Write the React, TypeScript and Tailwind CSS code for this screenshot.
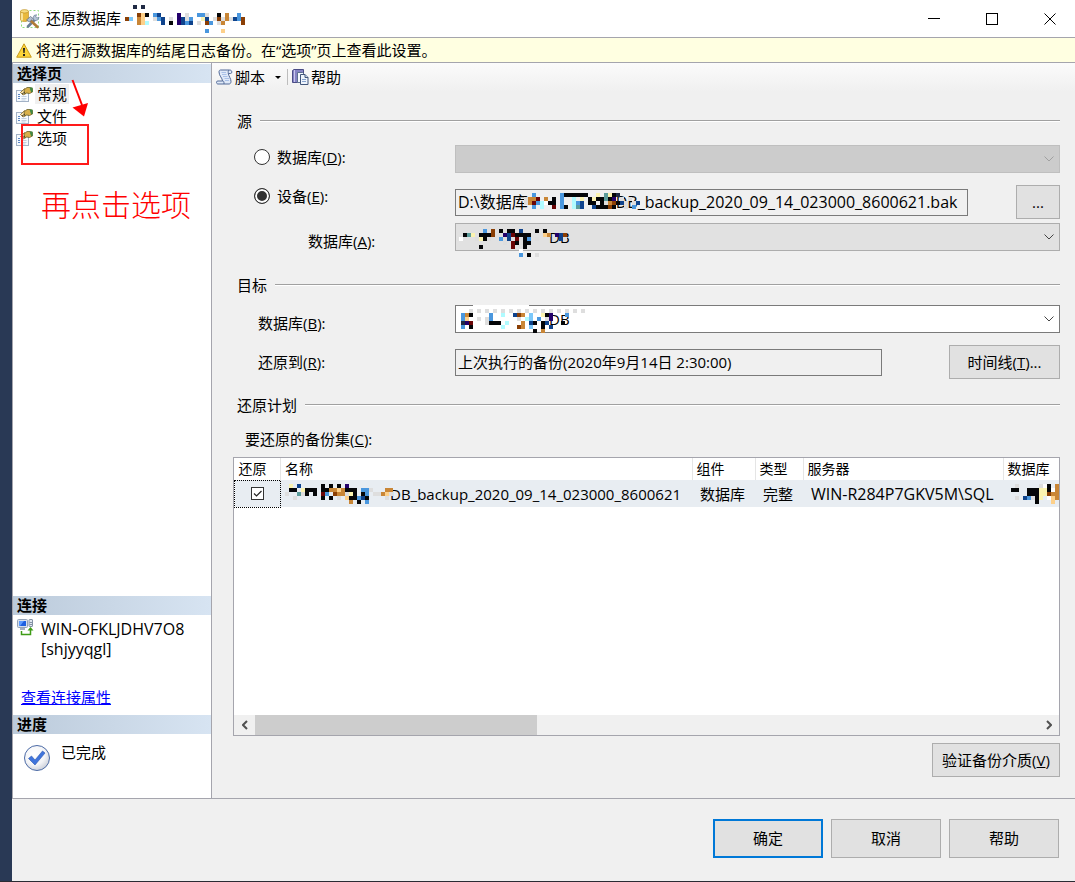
import type { ReactNode } from "react";
import clsx from "clsx";

const FONT = "font-['Open_Sans','Noto_Sans_CJK_SC',sans-serif]";

const PALETTE: Record<string, string> = {
  k: "#050608",
  n: "#1f2a44",
  p: "#23006b",
  d: "#0f438c",
  b: "#4a97de",
  l: "#7cc8fa",
  c: "#b0fbff",
  t: "#5b9c9b",
  o: "#c98636",
  m: "#8b3f05",
  r: "#6a0505",
  y: "#fbf3b0",
  s: "#fdd08a",
  g: "#dedede",
  w: "#ffffff",
};

// one character per 4px block, "." stays transparent
const TITLE_MOSAIC = [
  "..n.n..........................",
  "...............................",
  "...msk.bd....p.g..bbg..k.o..b..",
  "ml.os..gbd.g.pdgb..yd.gmgogdbm.",
  "...osc...d.k.pdbd.g.mb.go....m.",
  "...............................",
  "....................b...s......",
];

const DEVICE_MOSAIC = [
  "..b......bkkkkkk..y.tykn.....",
  "goor.o.k.b..c.y.kykktkp.g.g..",
  "gorbcwkk.b..cbd.kk.kgomkdg.gd",
  "..b.c..r.bk.ctd..dkkkmk..g.b.",
];

const SOURCE_DB_MOSAIC = [
  "......b.m.k.kk.d...k.k......",
  ".kty.kkkm..pdrkkkk...so.pdm.",
  "w...gykg..bgdgrgkb.g.....dg.",
  "...........g.rkgkk..........",
  ".....k.......r..k...........",
  "...............w............",
  "...............b.k.g........",
];

const TARGET_DB_MOSAIC = [
  "....wwwwwwwwwwwwww..............",
  "...g.g.g.g.g.g.g.g.g.g.g.g.g.g.g",
  ".bok....b..c..dmo.l..ykp...b....",
  ".bs..g.gb......g.cl.b.gp........",
  ".npr...gkkk.c...o.dk.kd...k.....",
  ".b.k.......c...mo.l..k.d........",
  "...................k.o..........",
];

const BACKUP_MOSAIC = [
  ".y.d.....k.k.k.p............",
  ".kk.ykkk.kkoosokkk.bbg...oo.",
  "g..tgk.k.rb.moogyk.kb.ggosg.",
  "..g......k.k.g.skkbdk....g..",
  "................o.k.b.......",
];

const CELL_MOSAIC = [
  ".g.....gwk.o",
  "kk..kkkyykwo",
  "....kkkyymoo",
  ".g.dbgky.wso",
  "......k...s.",
];

function Mosaic({ rows, className }: { rows: string[]; className?: string }) {
  const cols = Math.max(...rows.map((r) => r.length));
  return (
    <svg
      width={cols * 4}
      height={rows.length * 4}
      shapeRendering="crispEdges"
      aria-hidden="true"
      className={clsx("pointer-events-none", className)}
    >
      {rows.flatMap((row, y) =>
        [...row].map((ch, x) =>
          PALETTE[ch] ? <rect key={`${x}-${y}`} x={x * 4} y={y * 4} width="4" height="4" fill={PALETTE[ch]} /> : null,
        ),
      )}
    </svg>
  );
}

function DatabaseToolsIcon() {
  return (
    <svg width="20" height="20" viewBox="0 0 20 20" aria-hidden="true" className="shrink-0">
      <rect x="1.5" y="1.5" width="17" height="17" fill="none" stroke="#8fdc7a" strokeDasharray="2 2" />
      <path d="M0.5 2.5v8c0 1.400 2 2 4 2s4-.6 4-2v-8z" fill="#e9b93d" stroke="#b98a1c" strokeWidth=".6" />
      <path d="M2 4v7.500" stroke="#fff2b8" strokeWidth="1.500" />
      <ellipse cx="4.500" cy="2.300" rx="4" ry="1.700" fill="#f8dd83" stroke="#b98a1c" strokeWidth=".6" />
      <path d="M8 17.500l7-7" stroke="#6c7f96" strokeWidth="2.600" strokeLinecap="round" />
      <path d="M13 9l1-2.500 2.500-.8-.8 2.300 1.300 1 2-.8-.8 2.400-2.400 1-2-.6z" fill="#b8c7d8" stroke="#6c7f96" strokeWidth=".7" />
      <path d="M11 12l6.500 6" stroke="#b07b35" strokeWidth="2.600" strokeLinecap="round" />
      <path d="M6.500 11l4-3.500 2.500 2-3.500 3.500z" fill="#b4c0ce" stroke="#59687c" strokeWidth=".7" />
    </svg>
  );
}

function WarningIcon() {
  return (
    <svg width="16" height="15" viewBox="0 0 16 15" aria-hidden="true" className="shrink-0">
      <path d="M8 .8l7.300 13.400H.7z" fill="#fcd53a" stroke="#c99a1a" strokeLinejoin="round" />
      <path d="M7 5h2l-.4 5H7.400z" fill="#222" />
      <rect x="7" y="11" width="2" height="2" fill="#222" />
    </svg>
  );
}

function PageIcon() {
  return (
    <svg width="17" height="15" viewBox="0 0 17 15" aria-hidden="true" className="shrink-0">
      <rect x=".5" y="3.500" width="12" height="11" fill="#f6fafe" stroke="#a3b2c6" />
      <path d="M2 7.500h2M2 9.500h2M2 11.500h2" stroke="#5c86c4" />
      <path d="M5.500 9.500h5M5.500 11.500h5M5.500 13h4" stroke="#c3cfde" />
      <path d="M4.500 5.500l4-4 2.500 2 -1 3-3 1.500z" fill="#f8e0a8" stroke="#85651f" strokeWidth=".8" />
      <path d="M8 3l3-2.500h3l2.500 1v3.500l-3 1.500-3-.5-2 1z" fill="#d9b04a" stroke="#6b6026" strokeWidth=".8" />
      <path d="M13.500 .5h3v4.500H15z" fill="#3f8a45" />
      <path d="M6 7l3-2" stroke="#46402a" />
    </svg>
  );
}

function ScriptIcon() {
  return (
    <svg width="17" height="16" viewBox="0 0 17 16" aria-hidden="true">
      <path
        d="M4.500 1h9c1.800 0 2.300 1 2.300 2.200 0 .8-.6 1.300-1.300 1.300h-2.200c.5 3 2.700 5 2.700 8 0 1.500-.8 2.500-2 2.500H2c-1 0-1.500-.8-1.500-1.700 0-.8.5-1.300 1.300-1.300h4.700C6.500 9 3 7 3 3c0-1.200.5-2 1.500-2z"
        fill="#dfe9f8"
        stroke="#526a98"
      />
      <path d="M12.300 4.500c0-1.500-.5-2.500.9-3.500M6.500 12c1.500 0 1.500 1 1.500 3" fill="none" stroke="#526a98" />
      <path d="M5.500 3.500h4.500M6 5.500h4.500M7 7.500h4.500M8.500 9.500H13M9 11.500h4" stroke="#a9c1e8" />
    </svg>
  );
}

function HelpIcon() {
  return (
    <svg width="17" height="16" viewBox="0 0 17 16" aria-hidden="true">
      <path d="M.5 1.500L2 .5h9.500v13H.5z" fill="#8583c4" stroke="#4b4d86" />
      <path d="M2.500 1v12" stroke="#c8c6ec" />
      <path d="M5.500 3.500h5l2 2v8h-7z" fill="#f4f8fd" stroke="#5d7090" />
      <path d="M8.500 5.500h4.500l3 3v7H8.500z" fill="#eef4fc" stroke="#41557a" />
      <path d="M13 5.500v3h3" fill="#c4d4ea" stroke="#41557a" />
      <path d="M10 10.500h4M10 12.500h4" stroke="#86a2cd" />
    </svg>
  );
}

function ConnectionIcon() {
  return (
    <svg width="17" height="17" viewBox="0 0 17 17" aria-hidden="true" className="shrink-0">
      <rect x=".5" y=".5" width="10" height="8" rx="1" fill="#d7e0ec" stroke="#94a3b8" />
      <rect x="2" y="2" width="7" height="5" fill="#1d5fe0" />
      <path d="M2 2h5l-4 5H2z" fill="#5c9bff" />
      <rect x="3" y="9" width="5" height="2" fill="#a4afbf" />
      <rect x="12" y=".5" width="3.500" height="7" rx=".5" fill="#dfe6ef" stroke="#8391a5" />
      <path d="M12.500 3.500h2.500M12.500 5.500h2.500" stroke="#8391a5" />
      <path d="M4.500 12v3.500h9V10" fill="none" stroke="#3f9c16" strokeWidth="1.500" />
      <path d="M10.500 11.500L13.500 8l3 3.500z" fill="#3f9c16" />
    </svg>
  );
}

function DoneIcon() {
  return (
    <svg width="28" height="28" viewBox="0 0 28 28" aria-hidden="true" className="mt-0.5 shrink-0">
      <defs>
        <radialGradient id="ball" cx=".4" cy=".35" r=".7">
          <stop offset="0" stopColor="#ffffff" />
          <stop offset="0.600" stopColor="#f3f4f7" />
          <stop offset="1" stopColor="#c8ccd6" />
        </radialGradient>
      </defs>
      <circle cx="14" cy="14" r="12.500" fill="url(#ball)" stroke="#4c6ba6" />
      <path d="M5.500 14.500l3-2.500 3.500 4 7.500-9 2.500 2L12 21z" fill="#3f74dc" stroke="#2b56ae" strokeWidth=".6" />
    </svg>
  );
}

function Chevron({ className }: { className?: string }) {
  return (
    <svg
      width="10"
      height="6"
      viewBox="0 0 10 6"
      fill="none"
      stroke="currentColor"
      aria-hidden="true"
      className={clsx("pointer-events-none absolute top-1/2 right-1.5 -translate-y-1/2", className)}
    >
      <path d="M.5.5L5 5 9.500.5" />
    </svg>
  );
}

function SideHeading({ children }: { children: ReactNode }) {
  return (
    <h2 className="h-[19px] bg-linear-to-r from-[#bccbdb] to-[#d7e4f2] pl-1 text-[15px] leading-[19px] font-bold">
      {children}
    </h2>
  );
}

function GroupTitle({ children, className }: { children: ReactNode; className?: string }) {
  return (
    <div className={clsx("flex h-5 items-center gap-2", className)}>
      <h3 className="leading-5">{children}</h3>
      <span className="h-0.5 flex-1 border-t border-[#a0a0a0] bg-white" />
    </div>
  );
}

function Row({ children, className }: { children: ReactNode; className?: string }) {
  return <div className={clsx("grid grid-cols-[218px_1fr] items-center", className)}>{children}</div>;
}

function Button({ children, className }: { children: ReactNode; className?: string }) {
  return (
    <button type="button" className={clsx("shrink-0 bg-[#e1e1e1] text-center", className)}>
      {children}
    </button>
  );
}

function Radio({ id, defaultChecked }: { id: string; defaultChecked?: boolean }) {
  return (
    <input
      id={id}
      type="radio"
      name="source"
      defaultChecked={defaultChecked}
      className="size-4 appearance-none rounded-full border border-[#333] bg-white checked:bg-[#333] checked:shadow-[inset_0_0_0_2px_white]"
    />
  );
}

const pages = ["常规", "文件", "选项"];
const devicePath = `D:\\数据库${"\u2003".repeat(5)}\u2002DB_backup_2020_09_14_023000_8600621.bak`;

export default function App() {
  return (
    <div className={clsx("flex min-h-screen border-b border-[#2b2b33] bg-[#293955] text-[15px] text-black", FONT)}>
      <div className="ml-3 flex min-w-0 flex-1 flex-col bg-[#f0f0f0]">
        <header className="flex h-[37px] items-center bg-white pl-2">
          <DatabaseToolsIcon />
          <h1 className="ml-1.5 pb-0.5 leading-5">还原数据库</h1>
          <Mosaic rows={TITLE_MOSAIC} className="ml-1" />
          <div className="ml-auto flex self-stretch">
            <button type="button" aria-label="最小化" className="flex w-[58px] items-center justify-center">
              <svg width="12" height="12" stroke="black" aria-hidden="true">
                <path d="M0 5.500h12" />
              </svg>
            </button>
            <button type="button" aria-label="最大化" className="flex w-[58px] items-center justify-center">
              <svg width="12" height="12" stroke="black" fill="none" aria-hidden="true">
                <rect x=".5" y=".5" width="11" height="11" />
              </svg>
            </button>
            <button type="button" aria-label="关闭" className="flex w-[54px] items-center justify-center pl-1">
              <svg width="12" height="12" stroke="black" aria-hidden="true">
                <path d="M.5.5l11 11M11.500.5l-11 11" />
              </svg>
            </button>
          </div>
        </header>

        <div className="flex h-[26px] items-center gap-1 border-y border-[#a5a5ad] bg-[#ffffe1] pl-1">
          <WarningIcon />
          <p className="leading-6">将进行源数据库的结尾日志备份。在“选项”页上查看此设置。</p>
        </div>

        <div className="flex flex-1">
          <aside className="relative flex w-[200px] shrink-0 flex-col border-x border-[#a5a5ad] bg-white pt-px">
            <SideHeading>选择页</SideHeading>
            <ul>
              {pages.map((page, i) => (
                <li key={page}>
                  <button type="button" className="flex h-[22px] items-center gap-0.5 pl-[3px]">
                    <PageIcon />
                    <span className={clsx("px-0.5 leading-5", i === 0 && "bg-[#f0f0f0]")}>{page}</span>
                  </button>
                </li>
              ))}
            </ul>
            <p className="mt-9 ml-7 text-[30px] leading-10 font-light text-[#ff0000]">再点击选项</p>
            <svg width="80" height="90" aria-hidden="true" className="pointer-events-none absolute top-4 left-2">
              <path d="M51.500 1L61 26" stroke="#ff0000" strokeWidth="2" />
              <path d="M51.500 28.500L67 24 63 37.500z" fill="#ff0000" />
              <rect x="1" y="46" width="66" height="39" fill="none" stroke="#ff1a1a" strokeWidth="2" />
            </svg>

            <div className="mt-auto">
              <SideHeading>连接</SideHeading>
              <div className="flex h-[100px] flex-col justify-between pt-1 pb-2 pl-1">
                <div className="flex gap-[7px]">
                  <ConnectionIcon />
                  <p className="text-base leading-5">
                    WIN-OFKLJDHV7O8
                    <br />
                    [shjyyqgl]
                  </p>
                </div>
                <a href="#connection" className="pl-1 leading-5 text-[#0000ff] underline">
                  查看连接属性
                </a>
              </div>
              <SideHeading>进度</SideHeading>
              <div className="flex h-16 gap-2.5 pt-2 pl-2.5">
                <DoneIcon />
                <p className="leading-5">已完成</p>
              </div>
            </div>
          </aside>

          <main className="flex min-w-0 flex-1 flex-col">
            <div className="flex h-7 items-center bg-linear-to-b from-[#fbfbfb] to-[#f0f0f0] pl-1">
              <button type="button" className="flex items-center gap-0.5 leading-5">
                <ScriptIcon />
                脚本
                <svg width="6" height="3" aria-hidden="true" className="ml-2">
                  <path d="M0 0h6L3 3z" />
                </svg>
              </button>
              <span className="mr-1 ml-1.5 h-4 w-px bg-[#bdbdbd]" />
              <button type="button" className="flex items-center gap-0.5 leading-5">
                <HelpIcon />
                帮助
              </button>
            </div>

            <form className="flex flex-1 flex-col pt-5 pr-[15px] pb-[21px] pl-[25px]">
              <GroupTitle>源</GroupTitle>
              <Row className="mt-3.5">
                <div className="-mt-1 flex items-center gap-[7px] pl-[17px]">
                  <Radio id="src-db" />
                  <label htmlFor="src-db">
                    数据库(<u>D</u>):
                  </label>
                </div>
                <div className="relative">
                  <select
                    disabled
                    aria-label="源数据库"
                    className="block h-7 w-full appearance-none border border-[#bfbfbf] bg-[#cccccc] opacity-100"
                  />
                  <Chevron className="text-[#a0a0a0]" />
                </div>
              </Row>
              <Row className="mt-3">
                <div className="flex h-[22px] items-center gap-[7px] self-start pl-[17px]">
                  <Radio id="src-device" defaultChecked />
                  <label htmlFor="src-device">
                    设备(<u>E</u>):
                  </label>
                </div>
                <div className="flex items-center justify-between">
                  <div className="relative mr-12 flex-1">
                    <input
                      readOnly
                      aria-label="设备"
                      value={devicePath}
                      className="block h-[27px] w-full border border-[#7a7a7a] bg-[#f0f0f0] px-0.5 pb-0.5 text-base"
                    />
                    <Mosaic rows={DEVICE_MOSAIC} className="absolute top-1 left-[69px]" />
                  </div>
                  <Button className="h-[34px] w-11 border border-[#adadad]">...</Button>
                </div>
              </Row>
              <Row className="mt-1">
                <label htmlFor="device-db" className="self-end pl-[71px] leading-5">
                  数据库(<u>A</u>):
                </label>
                <div className="relative">
                  <select
                    id="device-db"
                    className="block h-7 w-full appearance-none border border-[#adadad] bg-[#e1e1e1] pl-[93px]"
                  >
                    <option>DB</option>
                  </select>
                  <Mosaic rows={SOURCE_DB_MOSAIC} className="absolute top-1.5 left-1" />
                  <Chevron className="text-[#444]" />
                </div>
              </Row>

              <GroupTitle className="mt-6">目标</GroupTitle>
              <Row className="mt-2.5">
                <label htmlFor="target-db" className="self-end pl-[21px] leading-5">
                  数据库(<u>B</u>):
                </label>
                <div className="relative">
                  <select
                    id="target-db"
                    className="block h-7 w-full appearance-none border border-[#7a7a7a] bg-white pl-[93px]"
                  >
                    <option>DB</option>
                  </select>
                  <Mosaic rows={TARGET_DB_MOSAIC} className="absolute top-0 left-0.5" />
                  <Chevron className="text-[#444]" />
                </div>
              </Row>
              <Row className="mt-3">
                <label htmlFor="restore-to" className="pl-[21px] leading-5">
                  还原到(<u>R</u>):
                </label>
                <div className="flex items-center justify-between">
                  <input
                    id="restore-to"
                    readOnly
                    value="上次执行的备份(2020年9月14日 2:30:00)"
                    className="mr-[67px] block h-[27px] min-w-0 flex-1 border border-[#7a7a7a] bg-[#f0f0f0] px-0.5 pb-0.5"
                  />
                  <Button className="h-[34px] w-[111px] border border-[#adadad]">
                    时间线(<u>T</u>)...
                  </Button>
                </div>
              </Row>

              <GroupTitle className="mt-4">还原计划</GroupTitle>
              <p className="mt-3.5 pl-2 leading-5">
                要还原的备份集(<u>C</u>):
              </p>
              <div className="mt-2 -ml-1 flex flex-1 flex-col border border-[#a5a5ad] bg-white">
                <table className="w-full table-fixed border-collapse text-left whitespace-nowrap">
                  <colgroup>
                    <col className="w-[46px]" />
                    <col />
                    <col className="w-[63px]" />
                    <col className="w-12" />
                    <col className="w-[200px]" />
                    <col className="w-14" />
                  </colgroup>
                  <thead>
                    <tr className="h-[22px] text-sm leading-5 *:border-r *:border-[#e5e5e5] *:pl-1 *:font-normal">
                      <th>还原</th>
                      <th>名称</th>
                      <th>组件</th>
                      <th>类型</th>
                      <th>服务器</th>
                      <th className="border-r-0!">数据库</th>
                    </tr>
                  </thead>
                  <tbody>
                    <tr className="h-[27px] bg-[#e8edf2] leading-5 *:pl-2">
                      <td className="border border-dotted border-black pl-0!">
                        <span className="flex justify-center">
                          <input
                            type="checkbox"
                            defaultChecked
                            aria-label="还原"
                            className="size-[13px] appearance-none border border-[#333] bg-white"
                          />
                          <svg
                            width="13"
                            height="13"
                            fill="none"
                            stroke="#222"
                            strokeWidth="1.200"
                            aria-hidden="true"
                            className="pointer-events-none -ml-[13px]"
                          >
                            <path d="M3 6.500l2.500 2.500L10.500 4" />
                          </svg>
                        </span>
                      </td>
                      <td className="relative">
                        <span className="pl-[101px]">DB_backup_2020_09_14_023000_8600621</span>
                        <Mosaic rows={BACKUP_MOSAIC} className="absolute top-1 left-1" />
                      </td>
                      <td>数据库</td>
                      <td>完整</td>
                      <td className="text-base leading-5">WIN-R284P7GKV5M\SQL</td>
                      <td>
                        <Mosaic rows={CELL_MOSAIC} />
                      </td>
                    </tr>
                  </tbody>
                </table>
                <div className="mt-auto flex h-5 items-center bg-[#f0f0f0] text-[#505050]">
                  <button type="button" aria-label="向左滚动" className="flex w-[21px] justify-center">
                    <svg width="6" height="10" fill="none" stroke="currentColor" strokeWidth="2" aria-hidden="true">
                      <path d="M5 1L1 5l4 4" />
                    </svg>
                  </button>
                  <div className="flex-1 self-stretch">
                    <div className="h-full w-[36%] bg-[#cdcdcd]" />
                  </div>
                  <button type="button" aria-label="向右滚动" className="flex w-[21px] justify-center">
                    <svg width="6" height="10" fill="none" stroke="currentColor" strokeWidth="2" aria-hidden="true">
                      <path d="M1 1l4 4-4 4" />
                    </svg>
                  </button>
                </div>
              </div>
              <Button className="mt-[7px] h-[34px] w-32 self-end border border-[#adadad]">
                验证备份介质(<u>V</u>)
              </Button>
            </form>
          </main>
        </div>

        <footer className="flex h-[83px] justify-end gap-2 border-t border-[#a5a5ad] pt-5 pr-4">
          <Button className="h-[39px] w-[110px] border-2 border-[#0078d7]">确定</Button>
          <Button className="h-[39px] w-[110px] border border-[#adadad]">取消</Button>
          <Button className="h-[39px] w-[110px] border border-[#adadad]">帮助</Button>
        </footer>
      </div>
    </div>
  );
}
